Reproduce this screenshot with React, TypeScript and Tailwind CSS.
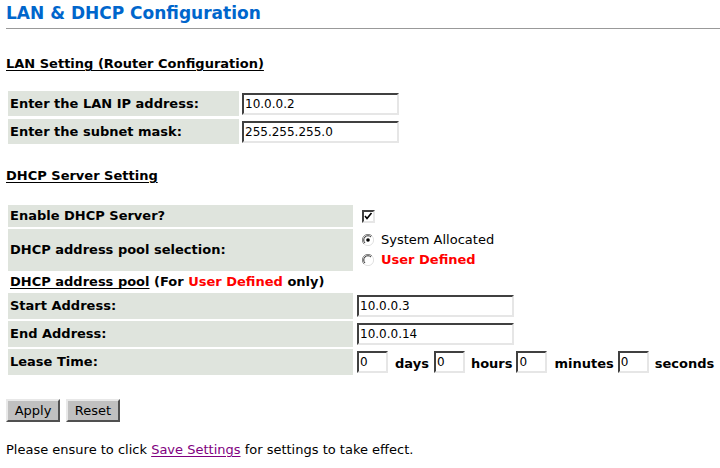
import React from "react";

const FONT = { fontFamily: '"DejaVu Sans", Verdana, sans-serif' };

function TextBox({ value, w = "w-[157px]" }: { value: string; w?: string }) {
  return (
    <div
      className={`${w} shrink-0 h-[22px] bg-white border-2 border-t-[#404040] border-l-[#404040] border-b-[#e6e6e6] border-r-[#e6e6e6] flex items-center pl-[1px] text-[12px] font-normal text-black leading-none`}
    >
      {value}
    </div>
  );
}

function Label({ children }: { children: React.ReactNode }) {
  return <span className="text-[13px] font-bold text-black pl-[2px]">{children}</span>;
}

function CheckBox() {
  return (
    <div className="w-[13px] h-[13px] border-2 border-t-[#404040] border-l-[#404040] border-b-[#e6e6e6] border-r-[#e6e6e6] bg-white flex items-center justify-center">
      <svg width="9" height="9" viewBox="0 0 9 9">
        <path d="M1 4 L3 6.5 L7.5 1" stroke="#000" strokeWidth="1.6" fill="none" />
      </svg>
    </div>
  );
}

function Radio({ on }: { on?: boolean }) {
  return (
    <svg width="12" height="12" viewBox="0 0 12 12">
      <path d="M10 2 A5.5 5.5 0 0 0 2 10" stroke="#808080" strokeWidth="1" fill="none" />
      <path d="M2 10 A5.5 5.5 0 0 0 10 2" stroke="#e0e0e0" strokeWidth="1" fill="none" />
      <circle cx="6" cy="6" r="4.3" fill="#fff" />
      <path d="M9 3 A4.2 4.2 0 0 0 3 9" stroke="#303030" strokeWidth="1" fill="none" />
      {on && <circle cx="6" cy="6" r="1.8" fill="#000" />}
    </svg>
  );
}

function Btn({ children, w }: { children: React.ReactNode; w: string }) {
  return (
    <button
      className={`${w} h-[23px] bg-[#c0c0c0] border-2 border-t-[#e8e8e8] border-l-[#e8e8e8] border-b-[#505050] border-r-[#505050] text-[13px] text-black flex items-center justify-center`}
    >
      {children}
    </button>
  );
}

function Row({ label, h = "h-[26px]", pad = "pl-[4px]", children }: { label: string; h?: string; pad?: string; children: React.ReactNode }) {
  return (
    <div className={`flex items-center ${h}`}>
      <div className="w-[345px] shrink-0 h-full bg-[#dfe4dd] flex items-center">
        <Label>{label}</Label>
      </div>
      <div className={pad}>{children}</div>
    </div>
  );
}

export default function App() {
  return (
    <div className="w-[720px] h-[468px] bg-white overflow-hidden text-black" style={FONT}>
      <div className="pl-[6px] pt-[1px]">
        <h1 className="text-[17px] font-bold text-[#0066cc] h-[25px] leading-[25px]">LAN &amp; DHCP Configuration</h1>
        <div className="h-[1px] bg-[#999999] mt-[2px]" />

        <div className="mt-[27px] text-[13px] font-bold underline underline-offset-[2px] h-[16px] leading-[16px]">
          LAN Setting (Router Configuration)
        </div>

        {/* LAN table */}
        <div className="mt-[19px] ml-[2px] flex flex-col gap-[3px]">
          <div className="flex items-center h-[25px]">
            <div className="w-[231px] shrink-0 h-full bg-[#dfe4dd] flex items-center">
              <Label>Enter the LAN IP address:</Label>
            </div>
            <div className="pl-[3px]">
              <TextBox value="10.0.0.2" />
            </div>
          </div>
          <div className="flex items-center h-[25px]">
            <div className="w-[231px] shrink-0 h-full bg-[#dfe4dd] flex items-center">
              <Label>Enter the subnet mask:</Label>
            </div>
            <div className="pl-[3px]">
              <TextBox value="255.255.255.0" />
            </div>
          </div>
        </div>

        <div className="mt-[24px] text-[13px] font-bold underline underline-offset-[2px] h-[16px] leading-[16px]">
          DHCP Server Setting
        </div>

        {/* DHCP table */}
        <div className="mt-[21px] ml-[2px] flex flex-col gap-[2px]">
          <Row label="Enable DHCP Server?" h="h-[22px]" pad="pl-[9px]">
            <CheckBox />
          </Row>
          <Row label="DHCP address pool selection:" h="h-[42px]" pad="pl-[9px]">
            <div className="flex flex-col gap-[3px] text-[13px]">
              <div className="flex items-center gap-[7px] h-[17px]">
                <Radio on />
                <span>System Allocated</span>
              </div>
              <div className="flex items-center gap-[7px] h-[17px]">
                <Radio />
                <span className="font-bold text-[#ff0000]">User Defined</span>
              </div>
            </div>
          </Row>
          <div className="h-[18px] flex items-center text-[13px] font-bold pl-[2px]">
            <span className="underline underline-offset-[2px]">DHCP address pool</span>
            <span>&nbsp;(For&nbsp;</span>
            <span className="text-[#ff0000]">User Defined</span>
            <span>&nbsp;only)</span>
          </div>
          <Row label="Start Address:">
            <TextBox value="10.0.0.3" />
          </Row>
          <Row label="End Address:">
            <TextBox value="10.0.0.14" />
          </Row>
          <Row label="Lease Time:">
            <div className="flex items-center text-[13px] font-bold whitespace-nowrap">
              <TextBox value="0" w="w-[31px]" />
              <span className="pl-[7px] pr-[5px] pt-[4px]">days</span>
              <TextBox value="0" w="w-[31px]" />
              <span className="pl-[6px] pr-[4px] pt-[4px]">hours</span>
              <TextBox value="0" w="w-[31px]" />
              <span className="pl-[7px] pr-[4px] pt-[4px]">minutes</span>
              <TextBox value="0" w="w-[31px]" />
              <span className="pl-[6px] pt-[4px]">seconds</span>
            </div>
          </Row>
        </div>

        <div className="mt-[24px] flex gap-[6px]">
          <Btn w="w-[54px]">Apply</Btn>
          <Btn w="w-[54px]">Reset</Btn>
        </div>

        <div className="mt-[20px] text-[13px] h-[16px] leading-[16px]">
          Please ensure to click{" "}
          <a className="text-[#800080] underline underline-offset-[2px]">Save Settings</a> for settings to take effect.
        </div>
      </div>
    </div>
  );
}
